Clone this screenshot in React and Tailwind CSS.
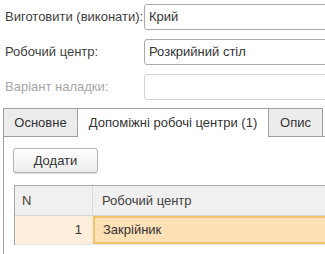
export default function App() {
  return (
    <div className="w-[325px] h-[254px] overflow-hidden bg-white text-[13px] text-[#404040] font-['Liberation_Sans',Arial,sans-serif]">
      <div className="flex flex-col gap-[9px] pt-[4px]">
        <div className="flex items-center h-[26px]">
          <div className="w-[144px] shrink-0 pl-[5px]">Виготовити (виконати):</div>
          <div className="flex items-center h-[26px] w-[200px] shrink-0 rounded-[3px] border border-[#a9a9a9] pl-[4px] text-[#333]">Крий</div>
        </div>
        <div className="flex items-center h-[26px]">
          <div className="w-[144px] shrink-0 pl-[5px]">Робочий центр:</div>
          <div className="flex items-center h-[26px] w-[200px] shrink-0 rounded-[3px] border border-[#a9a9a9] pl-[4px] text-[#333]">Розкрийний стіл</div>
        </div>
        <div className="flex items-center h-[26px]">
          <div className="w-[144px] shrink-0 pl-[5px] text-[#a6a6a6]">Варіант наладки:</div>
          <div className="h-[26px] w-[200px] shrink-0 rounded-[3px] border border-[#d4d4d4]"></div>
        </div>
      </div>

      <div className="mt-[8px] ml-[3px] flex items-end h-[29px]">
        <div className="flex items-center justify-center h-[29px] w-[75px] shrink-0 bg-[#ececec] border border-[#a0a0a0] text-[#333]">Основне</div>
        <div className="flex items-center justify-center h-[29px] w-[190px] shrink-0 bg-white border-t border-[#a0a0a0] text-[#333]">Допоміжні робочі центри (1)</div>
        <div className="flex items-center justify-center h-[29px] w-[55px] shrink-0 bg-[#ececec] border border-[#a0a0a0] text-[#333]">Опис</div>
        <div className="h-[29px] w-[40px] shrink-0 border-b border-[#a0a0a0]"></div>
      </div>

      <div className="ml-[3px] w-[400px] h-[200px] border-l border-[#a0a0a0] pl-[9px] pt-[11px]">
        <button className="flex items-center justify-center h-[25px] w-[85px] rounded-[3px] border border-[#b5b5b5] bg-gradient-to-b from-white to-[#ececec] text-[#333] shadow-[0_1px_1px_rgba(0,0,0,0.15)]">Додати</button>

        <div className="mt-[12px] ml-[1px] w-[400px] border-t border-l border-[#a8a8a8]">
          <div className="flex h-[30px] bg-[#f0f0f0] border-b border-[#d4d4d4]">
            <div className="flex items-center w-[78px] shrink-0 pl-[7px] border-r border-[#dcdcdc]">N</div>
            <div className="flex items-center flex-1 pl-[9px]">Робочий центр</div>
          </div>
          <div className="flex h-[29px] border-b border-[#e4e4e4]">
            <div className="flex items-center justify-end w-[78px] shrink-0 pr-[11px] bg-[#fdeedb] text-[#333]">1</div>
            <div className="flex items-center flex-1 pl-[8px] bg-[#fce0b6] border-2 border-[#f7c26c] text-[#333]">Закрійник</div>
          </div>
        </div>
      </div>
    </div>
  );
}
